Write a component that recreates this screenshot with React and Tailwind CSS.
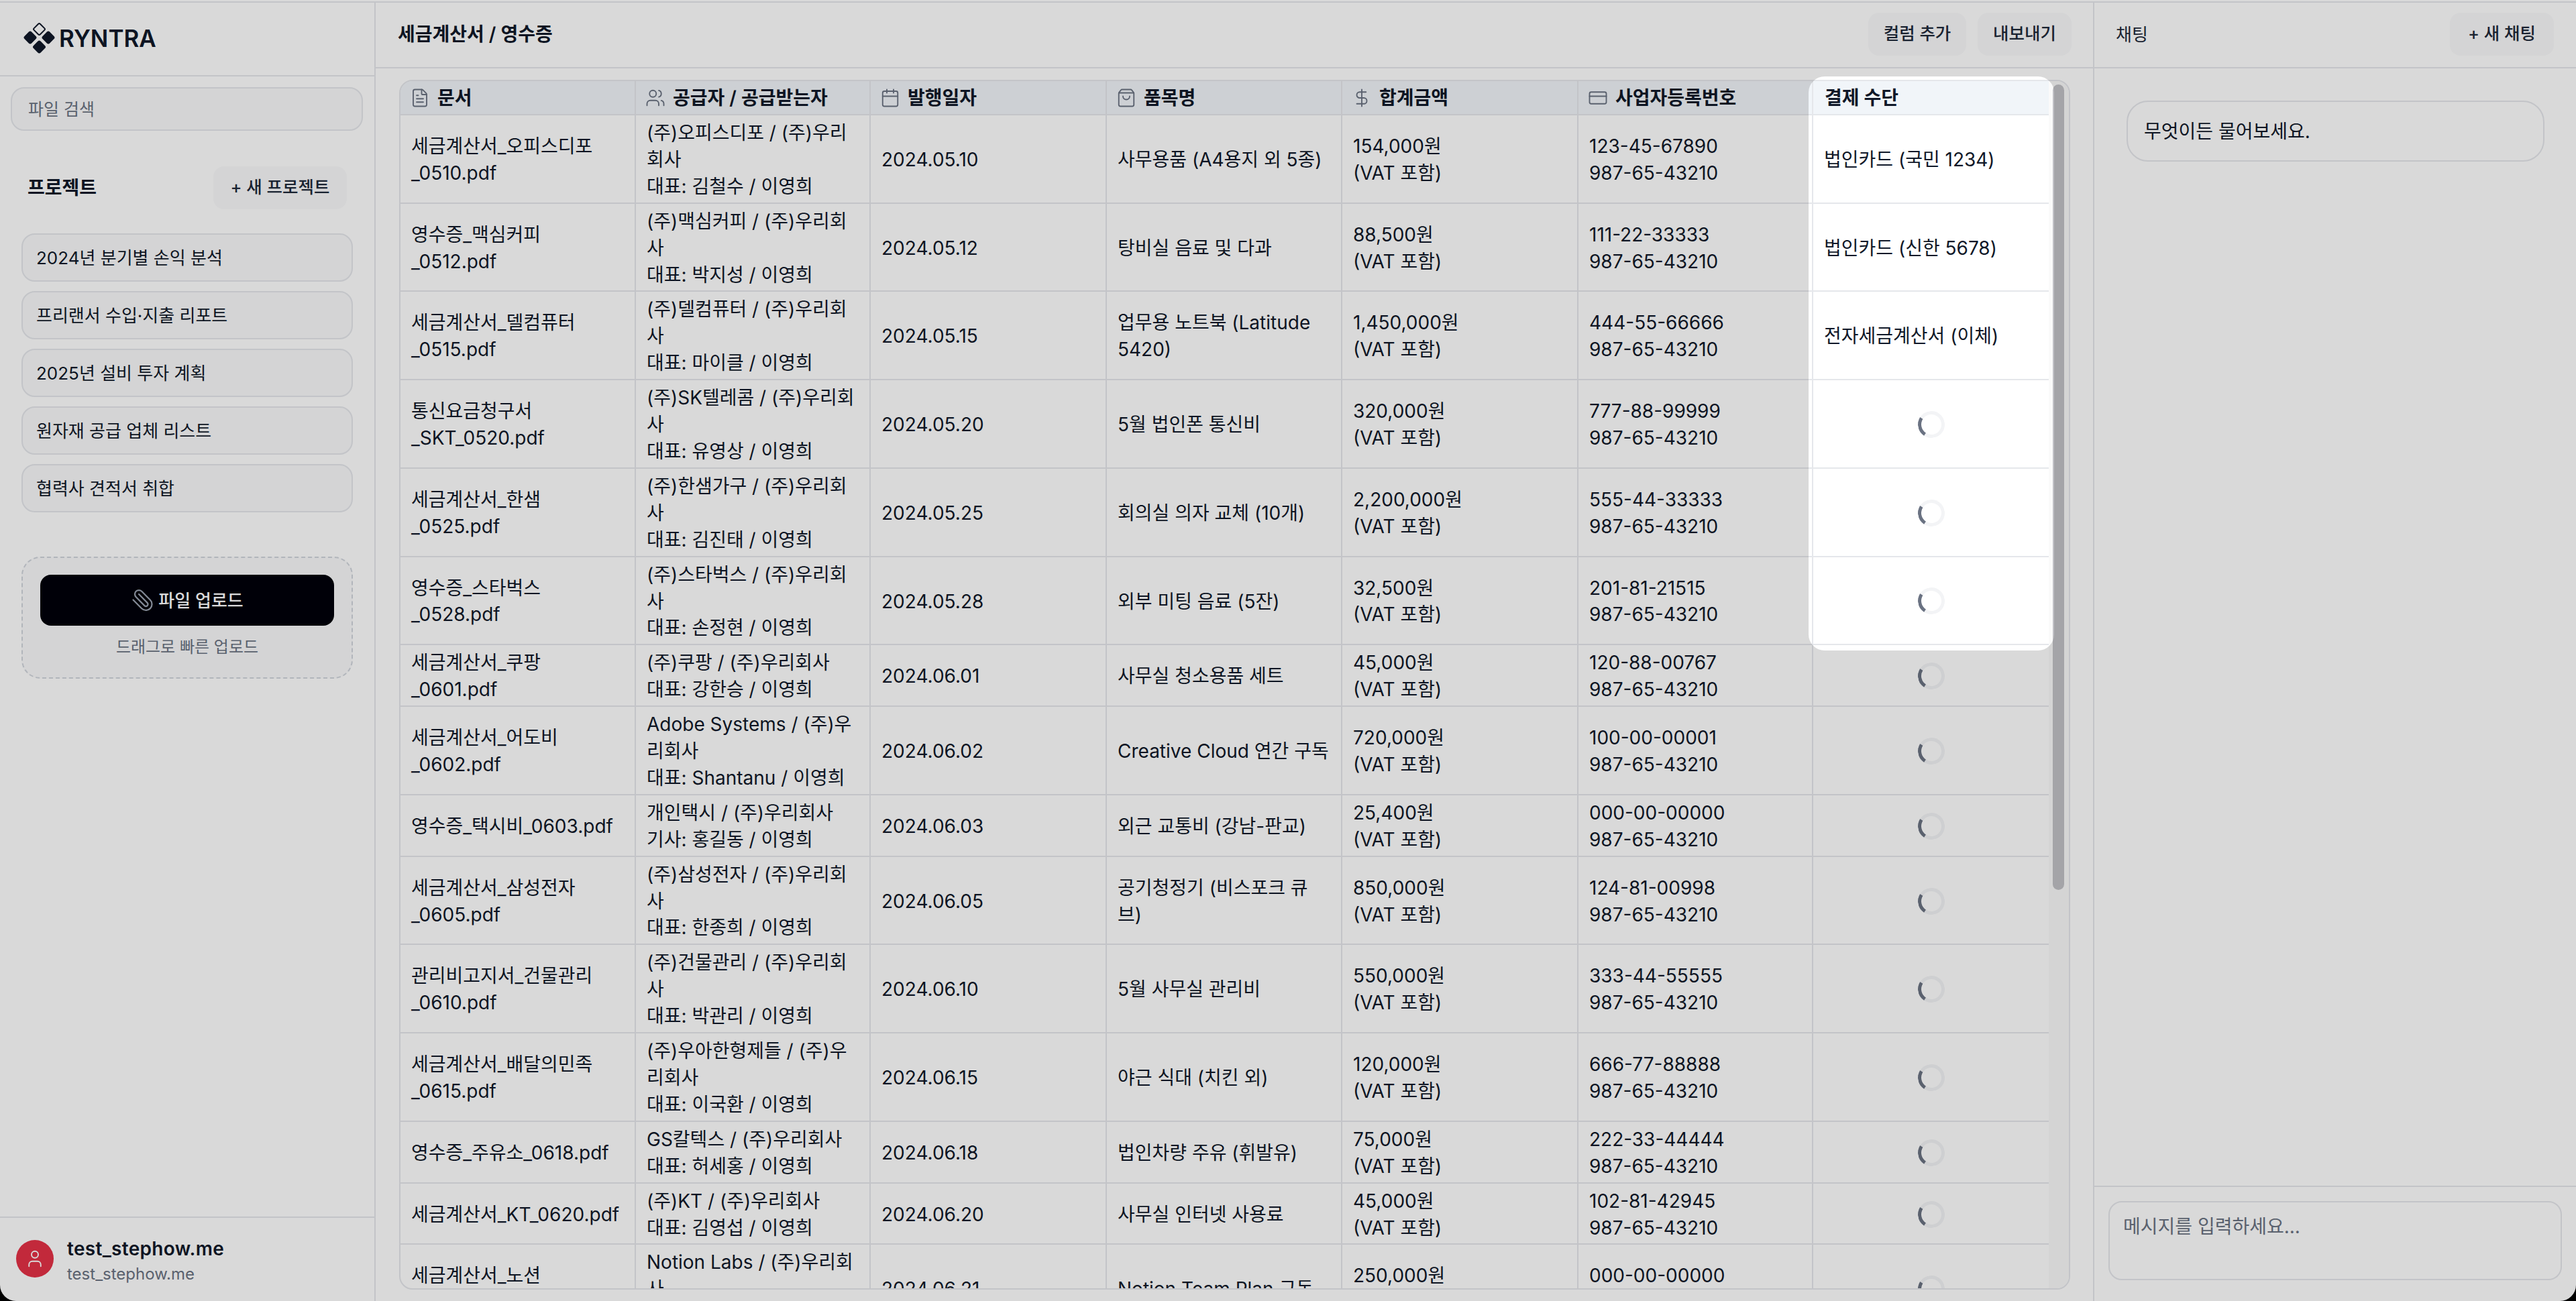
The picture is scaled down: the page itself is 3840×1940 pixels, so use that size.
// Tax invoice table view with a spotlight on the payment column
import React from 'react';
import { FileText, Users, Calendar, ShoppingBag, DollarSign, CreditCard, Paperclip, User } from 'lucide-react';

const ceo = '이영희';

const rows = [
  { doc: ['세금계산서_오피스디포', '_0510.pdf'], party: ['(주)오피스디포 / (주)우리', '회사', `대표: 김철수 / ${ceo}`], date: '2024.05.10', item: ['사무용품 (A4용지 외 5종)'], total: '154,000원', biz: '123-45-67890', pay: '법인카드 (국민 1234)' },
  { doc: ['영수증_맥심커피', '_0512.pdf'], party: ['(주)맥심커피 / (주)우리회', '사', `대표: 박지성 / ${ceo}`], date: '2024.05.12', item: ['탕비실 음료 및 다과'], total: '88,500원', biz: '111-22-33333', pay: '법인카드 (신한 5678)' },
  { doc: ['세금계산서_델컴퓨터', '_0515.pdf'], party: ['(주)델컴퓨터 / (주)우리회', '사', `대표: 마이클 / ${ceo}`], date: '2024.05.15', item: ['업무용 노트북 (Latitude', '5420)'], total: '1,450,000원', biz: '444-55-66666', pay: '전자세금계산서 (이체)' },
  { doc: ['통신요금청구서', '_SKT_0520.pdf'], party: ['(주)SK텔레콤 / (주)우리회', '사', `대표: 유영상 / ${ceo}`], date: '2024.05.20', item: ['5월 법인폰 통신비'], total: '320,000원', biz: '777-88-99999' },
  { doc: ['세금계산서_한샘', '_0525.pdf'], party: ['(주)한샘가구 / (주)우리회', '사', `대표: 김진태 / ${ceo}`], date: '2024.05.25', item: ['회의실 의자 교체 (10개)'], total: '2,200,000원', biz: '555-44-33333' },
  { doc: ['영수증_스타벅스', '_0528.pdf'], party: ['(주)스타벅스 / (주)우리회', '사', `대표: 손정현 / ${ceo}`], date: '2024.05.28', item: ['외부 미팅 음료 (5잔)'], total: '32,500원', biz: '201-81-21515' },
  { doc: ['세금계산서_쿠팡', '_0601.pdf'], party: ['(주)쿠팡 / (주)우리회사', `대표: 강한승 / ${ceo}`], date: '2024.06.01', item: ['사무실 청소용품 세트'], total: '45,000원', biz: '120-88-00767' },
  { doc: ['세금계산서_어도비', '_0602.pdf'], party: ['Adobe Systems / (주)우', '리회사', `대표: Shantanu / ${ceo}`], date: '2024.06.02', item: ['Creative Cloud 연간 구독'], total: '720,000원', biz: '100-00-00001' },
  { doc: ['영수증_택시비_0603.pdf'], party: ['개인택시 / (주)우리회사', `기사: 홍길동 / ${ceo}`], date: '2024.06.03', item: ['외근 교통비 (강남-판교)'], total: '25,400원', biz: '000-00-00000' },
  { doc: ['세금계산서_삼성전자', '_0605.pdf'], party: ['(주)삼성전자 / (주)우리회', '사', `대표: 한종희 / ${ceo}`], date: '2024.06.05', item: ['공기청정기 (비스포크 큐', '브)'], total: '850,000원', biz: '124-81-00998' },
  { doc: ['관리비고지서_건물관리', '_0610.pdf'], party: ['(주)건물관리 / (주)우리회', '사', `대표: 박관리 / ${ceo}`], date: '2024.06.10', item: ['5월 사무실 관리비'], total: '550,000원', biz: '333-44-55555' },
  { doc: ['세금계산서_배달의민족', '_0615.pdf'], party: ['(주)우아한형제들 / (주)우', '리회사', `대표: 이국환 / ${ceo}`], date: '2024.06.15', item: ['야근 식대 (치킨 외)'], total: '120,000원', biz: '666-77-88888' },
  { doc: ['영수증_주유소_0618.pdf'], party: ['GS칼텍스 / (주)우리회사', `대표: 허세홍 / ${ceo}`], date: '2024.06.18', item: ['법인차량 주유 (휘발유)'], total: '75,000원', biz: '222-33-44444' },
  { doc: ['세금계산서_KT_0620.pdf'], party: ['(주)KT / (주)우리회사', `대표: 김영섭 / ${ceo}`], date: '2024.06.20', item: ['사무실 인터넷 사용료'], total: '45,000원', biz: '102-81-42945' },
  { doc: ['세금계산서_노션', '_0621.pdf'], party: ['Notion Labs / (주)우리회', '사', `대표: Ivan Zhao / ${ceo}`], date: '2024.06.21', item: ['Notion Team Plan 구독'], total: '250,000원', biz: '000-00-00000' },
];

const projects = ['2024년 분기별 손익 분석', '프리랜서 수입·지출 리포트', '2025년 설비 투자 계획', '원자재 공급 업체 리스트', '협력사 견적서 취합'];

const columns = [
  { label: '문서', Icon: FileText, width: 'w-[351px]' },
  { label: '공급자 / 공급받는자', Icon: Users, width: 'w-[350px]' },
  { label: '발행일자', Icon: Calendar, width: 'w-[352px]' },
  { label: '품목명', Icon: ShoppingBag, width: 'w-[351px]' },
  { label: '합계금액', Icon: DollarSign, width: 'w-[352px]' },
  { label: '사업자등록번호', Icon: CreditCard, width: 'w-[350px]' },
  { label: '결제 수단', width: 'w-[353px]' },
];

function Lines({ lines }) {
  return lines.map((line) => (
    <div key={line} className="whitespace-nowrap">{line}</div>
  ));
}

function Cell({ children, center }) {
  return (
    <td className={`border-b-2 border-r-2 border-gray-200 px-4 pb-[3px] pt-[7px] align-middle text-[28px] leading-[39.9px] text-gray-900 ${center ? 'text-center' : ''}`}>
      {children}
    </td>
  );
}

function Spinner() {
  return <div className="mx-auto -mt-[2px] h-10 w-10 -rotate-12 rounded-full border-[5px] border-gray-100 border-l-gray-500" />;
}

function GhostButton({ children, className = '' }) {
  return (
    <button className={`h-[64px] rounded-[16px] bg-gray-50 pb-[2px] text-[25.5px] font-medium text-gray-800 ${className}`}>
      {children}
    </button>
  );
}

function Logo() {
  return (
    <svg width="48" height="48" viewBox="0 0 48 48" className="shrink-0 text-gray-900">
      <rect x="17" y="4" width="13" height="13" rx="2" fill="none" stroke="currentColor" strokeWidth="2" transform="rotate(45 23.500 10.500)" />
      <rect x="2.500" y="15.500" width="15" height="15" rx="3" fill="currentColor" transform="rotate(45 10 23)" />
      <rect x="29.500" y="15.500" width="15" height="15" rx="3" fill="currentColor" transform="rotate(45 37 23)" />
      <rect x="16" y="29.500" width="15" height="15" rx="3" fill="currentColor" transform="rotate(45 23.500 37)" />
    </svg>
  );
}

function Sidebar() {
  return (
    <aside className="flex w-[560px] shrink-0 flex-col border-r-2 border-gray-200">
      <div className="flex h-[110px] shrink-0 items-center gap-[5px] border-b-2 border-gray-200 pb-[2px] pl-[35px]">
        <Logo />
        <span className="text-[35px] font-semibold leading-none text-gray-900">RYNTRA</span>
      </div>
      <div className="pl-4 pr-[17px] pt-4">
        <input
          placeholder="파일 검색"
          className="h-[65px] w-full rounded-[20px] border-2 border-gray-200 bg-gray-50 px-6 text-[25px] placeholder:text-gray-500"
        />
      </div>
      <div className="mt-[53px] flex items-center justify-between pl-[41px] pr-[41px]">
        <span className="text-[28px] font-bold leading-none text-gray-900">프로젝트</span>
        <GhostButton className="w-[199px]">+ 새 프로젝트</GhostButton>
      </div>
      <div className="mt-9 flex flex-col gap-[14px] px-8">
        {projects.map((name) => (
          <div key={name} className="flex h-[72px] items-center rounded-[20px] border-2 border-gray-200 bg-gray-50 px-[20px] text-[26px] text-gray-900">
            {name}
          </div>
        ))}
      </div>
      <div className="mx-8 mt-[66px] flex h-[182px] flex-col items-center rounded-[28px] border-2 border-dashed border-gray-300 bg-gray-50 px-[26px] pt-[25px]">
        <button className="flex h-[76px] w-full items-center justify-center gap-[5px] rounded-[16px] bg-[#00000a] text-[26px] font-medium text-white">
          <Paperclip size={36} strokeWidth={1.5} className="-scale-x-100 text-gray-400" />
          <span>파일 업로드</span>
        </button>
        <span className="mt-[16px] text-[24px] leading-[32px] text-gray-500">드래그로 빠른 업로드</span>
      </div>
      <div className="mt-auto flex h-[126px] items-start gap-5 border-t-2 border-gray-200 pl-6 pt-[28px]">
        <div className="mt-[5px] flex h-14 w-14 items-center justify-center rounded-full bg-[#e43146] text-white">
          <User size={30} strokeWidth={1.5} />
        </div>
        <div className="flex flex-col">
          <span className="text-[28px] font-semibold leading-[36px] tracking-[0.3px] text-gray-900">test_stephow.me</span>
          <span className="mt-[4px] text-[24px] leading-[32px] text-gray-500">test_stephow.me</span>
        </div>
      </div>
    </aside>
  );
}

function InvoiceTable() {
  return (
    <div className="flex min-h-0 flex-1 overflow-hidden rounded-[20px] border-2 border-gray-200">
      <div className="min-w-0 flex-1 overflow-hidden">
        <table className="w-full table-fixed border-separate border-spacing-0">
          <colgroup>
            {columns.map(({ label, width }) => <col key={label} className={width} />)}
          </colgroup>
          <thead>
            <tr>
              {columns.map(({ label, Icon }) => (
                <th key={label} className="h-[51px] border-b-2 border-r-2 border-gray-200 bg-slate-100 px-[14px] text-left text-[28px] font-semibold leading-none text-gray-900">
                  <div className="flex items-center gap-[11px]">
                    {Icon && <Icon size={30} strokeWidth={1.5} className="shrink-0 text-gray-500" />}
                    <span className={Icon ? '' : 'pl-[3px]'}>{label}</span>
                  </div>
                </th>
              ))}
            </tr>
          </thead>
          <tbody>
            {rows.map((row) => (
              <tr key={row.doc.join('')}>
                <Cell><Lines lines={row.doc} /></Cell>
                <Cell><Lines lines={row.party} /></Cell>
                <Cell>{row.date}</Cell>
                <Cell><Lines lines={row.item} /></Cell>
                <Cell><Lines lines={[row.total, '(VAT 포함)']} /></Cell>
                <Cell><Lines lines={[row.biz, '987-65-43210']} /></Cell>
                <Cell center={!row.pay}>{row.pay ? row.pay : <Spinner />}</Cell>
              </tr>
            ))}
          </tbody>
        </table>
      </div>
      {/* scrollbar track, the table is longer than the window */}
      <div className="w-[30px] shrink-0 bg-[#fafafa] pl-[6px] pr-[7px] pt-[5px]">
        <div className="h-[1201px] rounded-full bg-[#c1c1c6]" />
      </div>
    </div>
  );
}

function Main() {
  return (
    <main className="flex w-[2560px] shrink-0 flex-col">
      <div className="flex h-[98px] shrink-0 items-center justify-between border-b-2 border-gray-200 pb-[2px] pl-[33px] pr-[32px]">
        <span className="text-[28px] font-semibold text-gray-900">세금계산서 / 영수증</span>
        <div className="flex gap-[17px]">
          <GhostButton className="w-[146px]">컬럼 추가</GhostButton>
          <GhostButton className="w-[140px]">내보내기</GhostButton>
        </div>
      </div>
      <div className="flex min-h-0 flex-1 flex-col pb-[17px] pl-[35px] pr-[34px] pt-[17px]">
        <InvoiceTable />
      </div>
    </main>
  );
}

function Chat() {
  return (
    <section className="flex min-w-0 flex-1 flex-col border-l-2 border-gray-200">
      <div className="flex h-[98px] shrink-0 items-center justify-between border-b-2 border-gray-200 pb-[2px] pl-[32px] pr-[33px]">
        <span className="text-[26px] text-gray-800">채팅</span>
        <GhostButton className="w-[155px]">+ 새 채팅</GhostButton>
      </div>
      <div className="flex-1 pl-[48px] pr-[47px] pt-[48px]">
        <div className="flex h-[91px] items-center rounded-[32px] border-2 border-gray-200 px-6 text-[28px] text-gray-900">
          무엇이든 물어보세요.
        </div>
      </div>
      <div className="flex h-[172px] shrink-0 border-t-2 border-gray-200 pb-[31px] pl-[21px] pr-[21px] pt-[21px]">
        <textarea
          placeholder="메시지를 입력하세요..."
          className="h-full w-full resize-none rounded-[20px] border-2 border-gray-200 px-5 py-[18px] text-[28px] leading-[36px] placeholder:text-gray-500"
        />
      </div>
    </section>
  );
}

export default function App() {
  return (
    <div className="h-screen bg-black font-['Inter','Noto_Sans_CJK_KR',sans-serif]">
      <div className="relative h-full overflow-hidden rounded-b-[24px] bg-white pt-[2px]">
        <div className="flex h-full border-t-2 border-gray-200">
          <Sidebar />
          <Main />
          <Chat />
        </div>
        {/* onboarding spotlight on the payment column */}
        <div className="pointer-events-none absolute left-[2696px] top-[114px] h-[856px] w-[366px] rounded-[24px] shadow-[0_0_0_9999px_rgba(0,0,0,0.15)]" />
      </div>
    </div>
  );
}
